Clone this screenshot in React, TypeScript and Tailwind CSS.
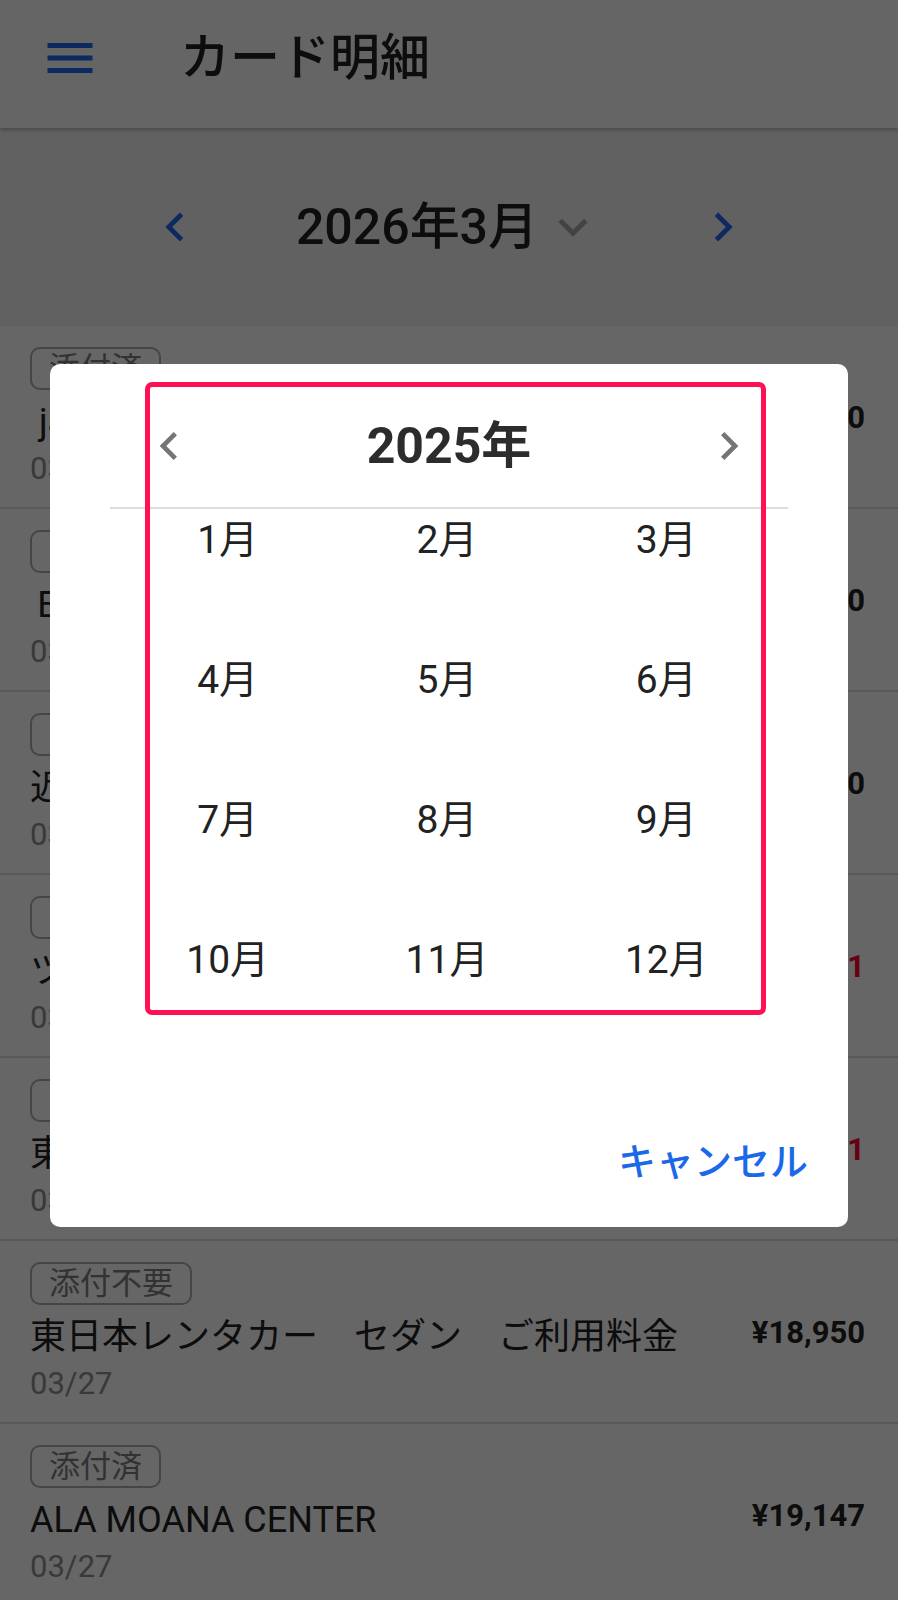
import type { SVGProps } from 'react'

// Material-style glyphs used on the screen
const MenuIcon = (props: SVGProps<SVGSVGElement>) => (
  <svg viewBox="0 0 24 24" fill="currentColor" {...props}>
    <path d="M3 18h18v-2H3v2zm0-5h18v-2H3v2zm0-7v2h18V6H3z" />
  </svg>
)

const ChevronLeft = (props: SVGProps<SVGSVGElement>) => (
  <svg viewBox="0 0 24 24" fill="currentColor" {...props}>
    <path d="M15.41 7.41 14 6l-6 6 6 6 1.41-1.41L10.83 12z" />
  </svg>
)

const ChevronRight = (props: SVGProps<SVGSVGElement>) => (
  <svg viewBox="0 0 24 24" fill="currentColor" {...props}>
    <path d="M10 6 8.59 7.41 13.17 12l-4.58 4.59L10 18l6-6z" />
  </svg>
)

const ExpandMore = (props: SVGProps<SVGSVGElement>) => (
  <svg viewBox="0 0 24 24" fill="currentColor" {...props}>
    <path d="M16.59 8.59 12 13.17 7.41 8.59 6 10l6 6 6-6z" />
  </svg>
)

const statements = [
  { badge: '添付済', name: '\u00a0jalan.net じゃらん', date: '03/28', amount: '¥12,000', refund: false },
  { badge: '添付済', name: '\u2009ETC利用料金', date: '03/28', amount: '¥3,520', refund: false },
  { badge: '添付不要', name: '近畿日本ツーリスト', date: '03/28', amount: '¥45,800', refund: false },
  { badge: '添付済', name: 'ツルハドラッグ', date: '03/27', amount: '-¥1,231', refund: true },
  { badge: '添付済', name: '東京メトロ', date: '03/27', amount: '-¥2,981', refund: true },
  { badge: '添付不要', name: '東日本レンタカー　セダン　ご利用料金', date: '03/27', amount: '¥18,950', refund: false },
  { badge: '添付済', name: 'ALA MOANA CENTER', date: '03/27', amount: '¥19,147', refund: false },
]

const months = Array.from({ length: 12 }, (_, i) => `${i + 1}月`)

export default function App() {
  return (
    <div className="relative min-h-screen overflow-hidden bg-white font-[Roboto,'Noto_Sans_CJK_JP',sans-serif] text-[#222]">
      {/* App bar */}
      <header className="relative z-10 flex h-[128px] items-center bg-[#fcfcfc] pb-[12px] pl-[40px] shadow-[0_2px_4px_rgba(0,0,0,0.25)]">
        <MenuIcon className="h-[60px] w-[60px] text-[#2368f5]" />
        <h1 className="ml-[80px] text-[50px] font-medium leading-none">カード明細</h1>
      </header>

      {/* Month switcher */}
      <div className="flex h-[198px] items-center justify-between bg-[#f2f2f2] px-[146px]">
        <ChevronLeft className="h-[58px] w-[58px] text-[#2368f5]" />
        <div className="flex items-center gap-[6px]">
          <span className="text-[50px] font-medium leading-none">2026年3月</span>
          <ExpandMore className="h-[58px] w-[58px] text-[#a8a8a8]" />
        </div>
        <ChevronRight className="h-[58px] w-[58px] text-[#2368f5]" />
      </div>

      {/* Statement list */}
      <div>
        {statements.map((s, i) => (
          <div
            key={i}
            className="flex h-[183px] justify-between border-b-2 border-[#dedede] pl-[30px] pr-[33px] pt-[21px]"
          >
            <div>
              <span className="inline-block h-[43px] rounded-[10px] border-2 border-[#acacac] px-[17px] text-[31px] leading-[39px] text-[#7e7e7e]">
                {s.badge}
              </span>
              <div className="mt-[8px] text-[36px] leading-[48px]">{s.name}</div>
              <div className="text-[31px] leading-[46px] text-[#8e8e8e]">{s.date}</div>
            </div>
            <div
              className={`mt-[51px] text-[31px] font-bold leading-[40px] ${s.refund ? 'text-[#ff0030]' : 'text-[#222]'}`}
            >
              {s.amount}
            </div>
          </div>
        ))}
      </div>

      {/* Month picker dialog */}
      <div className="fixed inset-0 z-20 flex items-center justify-center bg-black/60">
        <div className="relative mb-[9px] h-[863px] w-[798px] rounded-[10px] bg-white">
          <div className="flex h-[143px] items-center justify-between px-[91px] pt-[21px]">
            <ChevronLeft className="h-[56px] w-[56px] text-[#757575]" />
            <span className="text-[50px] font-bold leading-none text-[#2c2c2c]">2025年</span>
            <ChevronRight className="h-[56px] w-[56px] text-[#757575]" />
          </div>
          <div className="mx-[60px] h-[2px] bg-[#dddddd]" />

          <div className="grid grid-cols-3 pl-[68px] pr-[72px]">
            {months.map((m) => (
              <div key={m} className="h-[140px] pt-[6px] text-center text-[39px] leading-[50px] text-[#222]">
                {m}
              </div>
            ))}
          </div>

          <div className="mt-[68px] flex justify-end pr-[40px]">
            <button className="text-[38px] font-medium leading-[50px] text-[#1b68e8]">キャンセル</button>
          </div>

          {/* highlight frame */}
          <div className="pointer-events-none absolute left-[95px] top-[18px] h-[633px] w-[621px] rounded-[7px] border-[5px] border-[#ff1053]" />
        </div>
      </div>
    </div>
  )
}
